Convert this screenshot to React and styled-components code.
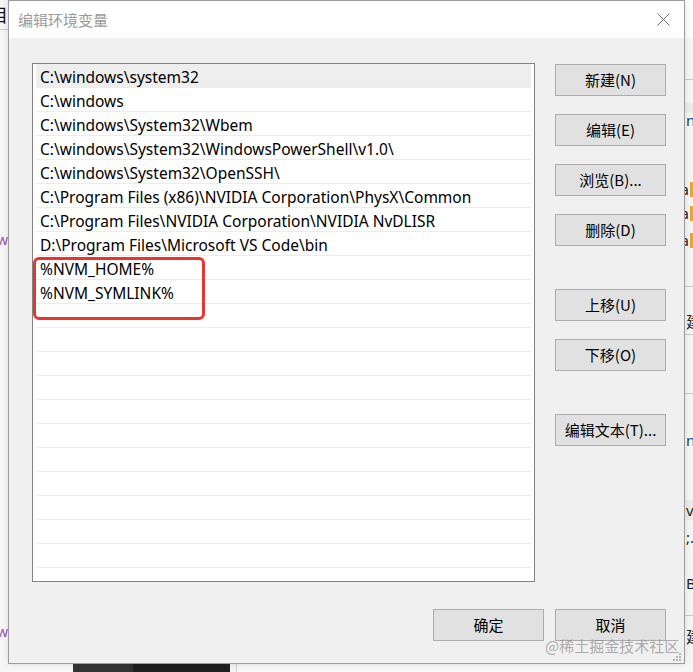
import React from "react";
import styled, { createGlobalStyle } from "styled-components";

const GlobalStyle = createGlobalStyle`
  html, body { margin: 0; padding: 0; }
  body {
    width: 693px;
    height: 672px;
    overflow: hidden;
    background: #f6f6f6;
    font-family: "Noto Sans", "Noto Sans CJK SC", sans-serif;
  }
  * { box-sizing: border-box; }
`;

const Desktop = styled.div`
  position: relative;
  width: 693px;
  height: 672px;
  overflow: hidden;
  background: #f7f7f7;
`;

/* ---- partially visible background windows ---- */
const BackWindow = styled.div`
  position: absolute;
  left: ${(p) => p.$x}px;
  top: 0;
  width: ${(p) => p.$w}px;
  height: ${(p) => p.$h}px;
  display: flex;
  flex-direction: column;
  overflow: hidden;
  background: #f6f6f6;
`;

const Cell = styled.div`
  flex: none;
  height: ${(p) => p.$h}px;
  display: flex;
  align-items: center;
  justify-content: ${(p) => (p.$end ? "flex-end" : "flex-start")};
  padding-left: ${(p) => (p.$end ? 0 : 1)}px;
  background: ${(p) => p.$bg || "transparent"};
  border-bottom: ${(p) => (p.$line ? "1px solid #c9c9c9" : "none")};
  font-family: "Noto Sans", "Noto Sans CJK SC", sans-serif;
  font-size: ${(p) => p.$size || 15}px;
  line-height: 1;
  color: ${(p) => p.$color || "#222"};
  white-space: nowrap;
`;

const Accent = styled.span`
  display: inline-block;
  flex: none;
  width: 3px;
  height: 15px;
  margin-left: 1px;
  background: #e7a23a;
`;

const Taskbar = styled.div`
  position: absolute;
  left: 73px;
  top: 664px;
  width: 164px;
  height: 8px;
  display: flex;
`;

const TaskSlot = styled.div`
  width: ${(p) => p.$w}px;
  background: ${(p) => p.$color};
  border-right: ${(p) => (p.$edge ? "1px solid #cfcfcf" : "none")};
`;

/* ---- dialog window ---- */
const Dialog = styled.div`
  position: absolute;
  left: 8px;
  top: 0;
  width: 677px;
  height: 664px;
  border: 1px solid #9c9c9c;
  background: #f0f0f0;
  display: flex;
  flex-direction: column;
  box-shadow: 0 0 6px rgba(0, 0, 0, 0.12);
`;

const TitleBar = styled.div`
  height: 37px;
  flex: none;
  background: #ffffff;
  display: flex;
  align-items: center;
  justify-content: space-between;
  padding: 0 14px 0 9px;
`;

const Title = styled.span`
  font-family: "Noto Sans CJK SC", sans-serif;
  font-size: 15px;
  color: #9a9a9a;
`;

const CloseButton = styled.div`
  width: 14px;
  height: 14px;
  display: flex;
  align-items: center;
  justify-content: center;
`;

const Body = styled.div`
  flex: 1;
  display: flex;
  flex-direction: column;
  padding: 25px 18px 21px 23px;
`;

const MainRow = styled.div`
  display: flex;
  gap: 20px;
`;

const ListBox = styled.div`
  position: relative;
  width: 503px;
  height: 519px;
  border: 1px solid #828282;
  background: #ffffff;
  padding: 0 3px;
  overflow: hidden;
`;

const Row = styled.div`
  height: 24px;
  display: flex;
  align-items: center;
  padding: 3px 0 0 4px;
  border-bottom: 1px solid #ececec;
  background: ${(p) => (p.$selected ? "#eeeeee" : "transparent")};
  font-family: "Noto Sans", "Noto Sans CJK SC", sans-serif;
  font-size: 15.5px;
  color: #000;
  white-space: nowrap;
`;

const Highlight = styled.div`
  position: absolute;
  left: 0;
  top: 193px;
  width: 172px;
  height: 63px;
  border: 3px solid #e8352d;
  border-radius: 6px;
  pointer-events: none;
`;

const SideButtons = styled.div`
  display: flex;
  flex-direction: column;
  padding-top: 1px;
`;

const Button = styled.div`
  width: 111px;
  height: 32px;
  margin-top: ${(p) => p.$gap || 0}px;
  background: #e1e1e1;
  border: 1px solid #adadad;
  display: flex;
  align-items: center;
  justify-content: center;
  padding-bottom: 2px;
  font-family: "Noto Sans CJK SC", sans-serif;
  font-size: 15px;
  color: #000;
  white-space: nowrap;
`;

const Footer = styled.div`
  display: flex;
  justify-content: flex-end;
  gap: 11px;
  margin-top: 27px;
`;

const Watermark = styled.div`
  position: absolute;
  left: 545px;
  top: 636px;
  font-family: "Noto Sans CJK SC", sans-serif;
  font-size: 15px;
  line-height: 20px;
  color: rgba(140, 140, 140, 0.7);
  white-space: nowrap;
`;

const Grip = styled.svg`
  position: absolute;
  left: 670px;
  top: 651px;
`;

const entries = [
  "C:\\windows\\system32",
  "C:\\windows",
  "C:\\windows\\System32\\Wbem",
  "C:\\windows\\System32\\WindowsPowerShell\\v1.0\\",
  "C:\\windows\\System32\\OpenSSH\\",
  "C:\\Program Files (x86)\\NVIDIA Corporation\\PhysX\\Common",
  "C:\\Program Files\\NVIDIA Corporation\\NVIDIA NvDLISR",
  "D:\\Program Files\\Microsoft VS Code\\bin",
  "%NVM_HOME%",
  "%NVM_SYMLINK%",
];

const rows = Array.from({ length: 22 }, (_, i) => entries[i] || "");

const sideButtons = [
  { label: "新建(N)", gap: 0 },
  { label: "编辑(E)", gap: 18 },
  { label: "浏览(B)...", gap: 18 },
  { label: "删除(D)", gap: 18 },
  { label: "上移(U)", gap: 43 },
  { label: "下移(O)", gap: 18 },
  { label: "编辑文本(T)...", gap: 43 },
];

const leftCells = [
  { h: 30, line: true, text: "目", size: 18, color: "#111", end: true },
  { h: 202 },
  { h: 16, text: "w", size: 14, color: "#9a4fc0", end: true },
  { h: 376 },
  { h: 16, text: "w", size: 14, color: "#9a4fc0", end: true },
];

const rightCells = [
  { h: 38, bg: "#fdfdfd" },
  { h: 42, line: true },
  { h: 23 },
  { h: 10, bg: "#ececec" },
  { h: 14, text: "n", color: "#1d3f6e" },
  { h: 54 },
  { h: 16, text: "a", accent: true, end: true },
  { h: 8 },
  { h: 16, text: "a", accent: true, end: true },
  { h: 11 },
  { h: 16, text: "a", accent: true, end: true },
  { h: 39, line: true },
  { h: 26 },
  { h: 18, text: "建", size: 16 },
  { h: 4, line: true },
  { h: 59, line: true },
  { h: 38 },
  { h: 16, text: "n", color: "#1d3f6e" },
  { h: 52 },
  { h: 20, text: "vi", bg: "#ececec" },
  { h: 9 },
  { h: 16, text: ";." },
  { h: 30 },
  { h: 16, text: "B" },
  { h: 25, line: true },
  { h: 12 },
  { h: 18, text: "建", size: 16 },
];

function StripCells({ cells }) {
  return cells.map((c, i) => (
    <Cell
      key={i}
      $h={c.h}
      $line={c.line}
      $bg={c.bg}
      $size={c.size}
      $color={c.color}
      $end={c.end}
    >
      {c.text}
      {c.accent && <Accent />}
    </Cell>
  ));
}

export default function App() {
  return (
    <>
      <GlobalStyle />
      <Desktop>
        <BackWindow $x={0} $w={8} $h={672}>
          <StripCells cells={leftCells} />
        </BackWindow>
        <BackWindow $x={685} $w={8} $h={664}>
          <StripCells cells={rightCells} />
        </BackWindow>
        <Taskbar>
          <TaskSlot $w={60} $color="#333333" />
          <TaskSlot $w={97} $color="#1f1f1f" />
          <TaskSlot $w={7} $color="#f4f4f4" $edge />
        </Taskbar>

        <Dialog>
          <TitleBar>
            <Title>编辑环境变量</Title>
            <CloseButton>
              <svg width="13" height="13" viewBox="0 0 13 13">
                <path d="M0.5 0.5 L12.5 12.5 M12.5 0.5 L0.5 12.5" stroke="#6b6b6b" strokeWidth="1" fill="none" />
              </svg>
            </CloseButton>
          </TitleBar>
          <Body>
            <MainRow>
              <ListBox>
                {rows.map((text, i) => (
                  <Row key={i} $selected={i === 0}>{text}</Row>
                ))}
                <Highlight />
              </ListBox>
              <SideButtons>
                {sideButtons.map((b) => (
                  <Button key={b.label} $gap={b.gap}>{b.label}</Button>
                ))}
              </SideButtons>
            </MainRow>
            <Footer>
              <Button>确定</Button>
              <Button>取消</Button>
            </Footer>
          </Body>
        </Dialog>

        <Watermark>@稀土掘金技术社区</Watermark>
        <Grip width="12" height="12" viewBox="0 0 12 12">
          {[
            [9, 1],
            [6, 4], [9, 4],
            [3, 7], [6, 7], [9, 7],
          ].map(([x, y]) => (
            <rect key={`${x}-${y}`} x={x} y={y + 1} width="2" height="2" fill="#b5b5b5" />
          ))}
        </Grip>
      </Desktop>
    </>
  );
}
